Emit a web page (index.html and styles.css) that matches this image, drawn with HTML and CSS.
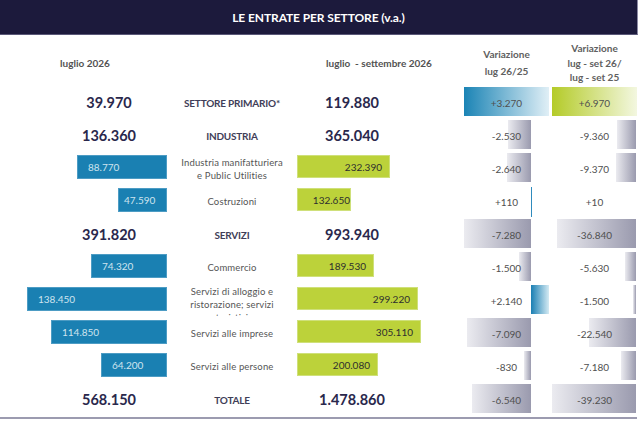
FILE: index.html
```html
<!DOCTYPE html>
<html lang="it">
<head>
<meta charset="utf-8">
<title>Le entrate per settore</title>
<link rel="stylesheet" href="styles.css">
</head>
<body>
<div class="sheet">
  <div class="title">LE ENTRATE PER SETTORE (v.a.)</div>

  <div class="row head">
    <div class="c1 hd">luglio 2026</div>
    <div class="c2"></div>
    <div class="c3 hd">luglio&nbsp; - settembre 2026</div>
    <div class="c4 hd va">Variazione<br>lug 26/25</div>
    <div class="c5 hd vb">Variazione<br>lug - set 26/<br>lug - set 25</div>
  </div>

  <div class="row">
    <div class="c1 big-l"><span class="big">39.970</span></div>
    <div class="c2 lab-b">SETTORE PRIMARIO*</div>
    <div class="c3 big-r"><span class="big">119.880</span></div>
    <div class="c4 var"><div class="full full-blue"></div><span class="v">+3.270</span></div>
    <div class="c5 var"><div class="full full-green"></div><span class="v">+6.970</span></div>
  </div>

  <div class="row">
    <div class="c1 big-l"><span class="big">136.360</span></div>
    <div class="c2 lab-b">INDUSTRIA</div>
    <div class="c3 big-r"><span class="big">365.040</span></div>
    <div class="c4 var"><div class="neg" style="width:23px"></div><span class="v">-2.530</span></div>
    <div class="c5 var"><div class="neg" style="width:19px"></div><span class="v">-9.360</span></div>
  </div>

  <div class="row">
    <div class="c1 bars-l"><div class="bar blue" style="width:90px">88.770</div></div>
    <div class="c2 lab">Industria manifatturiera<br>e Public Utilities</div>
    <div class="c3 bars-r"><div class="bar green" style="width:93px">232.390</div></div>
    <div class="c4 var"><div class="neg" style="width:24px"></div><span class="v">-2.640</span></div>
    <div class="c5 var"><div class="neg" style="width:20px"></div><span class="v">-9.370</span></div>
  </div>

  <div class="row">
    <div class="c1 bars-l"><div class="bar blue short" style="width:49px">47.590</div></div>
    <div class="c2 lab">Costruzioni</div>
    <div class="c3 bars-r"><div class="bar green short" style="width:54px">132.650</div></div>
    <div class="c4 var"><div class="line"></div><span class="v">+110</span></div>
    <div class="c5 var"><span class="v">+10</span></div>
  </div>

  <div class="row">
    <div class="c1 big-l"><span class="big">391.820</span></div>
    <div class="c2 lab-b">SERVIZI</div>
    <div class="c3 big-r"><span class="big">993.940</span></div>
    <div class="c4 var"><div class="neg" style="width:67px"></div><span class="v">-7.280</span></div>
    <div class="c5 var"><div class="neg" style="width:79px"></div><span class="v">-36.840</span></div>
  </div>

  <div class="row">
    <div class="c1 bars-l"><div class="bar blue" style="width:76px">74.320</div></div>
    <div class="c2 lab">Commercio</div>
    <div class="c3 bars-r"><div class="bar green" style="width:77px">189.530</div></div>
    <div class="c4 var"><div class="neg" style="width:12px"></div><span class="v">-1.500</span></div>
    <div class="c5 var"><div class="neg" style="width:11px"></div><span class="v">-5.630</span></div>
  </div>

  <div class="row">
    <div class="c1 bars-l"><div class="bar blue" style="width:140px">138.450</div></div>
    <div class="c2 lab clip">Servizi di alloggio e<br>ristorazione; servizi<br>turistici</div>
    <div class="c3 bars-r"><div class="bar green" style="width:121px">299.220</div></div>
    <div class="c4 var"><div class="pos" style="width:18px"></div><span class="v">+2.140</span></div>
    <div class="c5 var"><div class="neg" style="width:3px"></div><span class="v">-1.500</span></div>
  </div>

  <div class="row">
    <div class="c1 bars-l"><div class="bar blue" style="width:116px">114.850</div></div>
    <div class="c2 lab">Servizi alle imprese</div>
    <div class="c3 bars-r"><div class="bar green" style="width:124px">305.110</div></div>
    <div class="c4 var"><div class="neg" style="width:64px"></div><span class="v">-7.090</span></div>
    <div class="c5 var"><div class="neg" style="width:47px"></div><span class="v">-22.540</span></div>
  </div>

  <div class="row">
    <div class="c1 bars-l"><div class="bar blue" style="width:66px">64.200</div></div>
    <div class="c2 lab">Servizi alle persone</div>
    <div class="c3 bars-r"><div class="bar green" style="width:81px">200.080</div></div>
    <div class="c4 var"><div class="neg" style="width:7px"></div><span class="v">-830</span></div>
    <div class="c5 var"><div class="neg" style="width:15px"></div><span class="v">-7.180</span></div>
  </div>

  <div class="row">
    <div class="c1 big-l"><span class="big">568.150</span></div>
    <div class="c2 lab-b">TOTALE</div>
    <div class="c3 big-r"><span class="big">1.478.860</span></div>
    <div class="c4 var"><div class="neg" style="width:59px"></div><span class="v">-6.540</span></div>
    <div class="c5 var"><div class="neg" style="width:84px"></div><span class="v">-39.230</span></div>
  </div>

  <div class="rule"></div>
</div>
</body>
</html>
```

FILE: styles.css
```css
* { box-sizing: border-box; }

html, body {
  margin: 0;
  padding: 0;
  background: #ffffff;
}

body {
  font-family: Lato, "Open Sans", "Liberation Sans", sans-serif;
  color: #555;
  width: 640px;
  height: 421px;
  overflow: hidden;
}

.sheet {
  width: 640px;
  padding-top: 0;
}

.title {
  width: 638px;
  height: 35px;
  background: #1c1a3c;
  border-right: 1px solid #8c8aa4;
  border-bottom: 1px solid #5a5878;
  color: #ffffff;
  font-weight: 700;
  font-size: 12px;
  display: flex;
  align-items: center;
  justify-content: center;
  letter-spacing: -0.1px;
}

.row {
  display: flex;
  height: 33px;
}

.row.head {
  height: 51px;
  align-items: center;
  padding-top: 5px;
}

.c1 { width: 172px; }
.c2 { width: 120px; }
.c3 { width: 172px; }
.c4 { width: 85px; }
.c5 { width: 85px; margin-left: 3px; }

.hd {
  font-size: 10px;
  font-weight: 700;
  color: #525252;
  text-align: center;
}

.head .c1 { padding-right: 2px; }
.head .c3 { padding-left: 2px; }
.va { line-height: 17px; color: #606060; }
.vb { line-height: 14.5px; color: #606060; }

.big-l,
.big-r,
.lab,
.lab-b {
  display: flex;
  align-items: center;
  justify-content: center;
}

.big-l { padding-left: 46px; }
.big-r { padding-right: 52px; }

.big {
  font-size: 14.5px;
  font-weight: 700;
  color: #2a284c;
}

.lab-b {
  font-size: 10px;
  font-weight: 700;
  color: #3f3e58;
  letter-spacing: -0.2px;
}

.lab {
  font-size: 9.5px;
  line-height: 13px;
  color: #555;
  text-align: center;
  letter-spacing: 0.15px;
}

.lab.clip {
  height: 31px;
  overflow: hidden;
  margin-top: 1px;
  align-items: flex-start;
  padding-top: 0;
}

.clip { line-height: 13px; }

.bars-l {
  display: flex;
  justify-content: flex-end;
  align-items: flex-start;
  padding-right: 5px;
}

.bars-r {
  display: flex;
  justify-content: flex-start;
  align-items: flex-start;
  padding-left: 5px;
}

.bar {
  height: 24px;
  margin-top: 3px;
  line-height: 22px;
  font-size: 10px;
  white-space: nowrap;
}

.bar.blue {
  background: #1a80b2;
  border: 1px solid #4d9cc4;
  color: #cfe4ef;
  padding-left: 10px;
}

.bar.blue.short { padding-left: 5px; }

.bar.green {
  background: #bcd23a;
  border: 1px solid #cfe07a;
  color: #2e2e2e;
  text-align: right;
  padding-right: 7px;
  height: 23px;
}

.bar.green.short { padding-right: 0; overflow: visible; }

.var {
  display: grid;
  grid-template: 33px / 85px;
}

.var > * {
  grid-area: 1 / 1;
}

.v {
  justify-self: center;
  align-self: center;
  font-size: 10px;
  color: #505050;
  position: relative;
}

.neg {
  justify-self: end;
  align-self: start;
  height: 29px;
  margin-top: 1px;
  background: linear-gradient(to right, #ebebf0, #9a9aae);
}

.c4 .neg { margin-right: 18px; }
.c5 .neg { margin-right: 1px; }

.pos {
  justify-self: start;
  align-self: start;
  margin-left: 67px;
  height: 29px;
  margin-top: 1px;
  background: linear-gradient(to right, #1a7fb3, #d4eaf3);
}

.line {
  justify-self: start;
  align-self: start;
  margin-left: 67px;
  margin-top: 2px;
  width: 1px;
  height: 30px;
  background: #2f8bbd;
}

.full {
  align-self: start;
  height: 29px;
  margin-top: 1px;
  width: 85px;
}

.full-blue { background: linear-gradient(to right, #1b84b5, #e0eff6); }
.full-green { background: linear-gradient(to right, #b4cb28, #f3f7e0); }

.rule {
  width: 637px;
  height: 2px;
  margin-top: 1px;
  background: #9c9bb0;
}
```
